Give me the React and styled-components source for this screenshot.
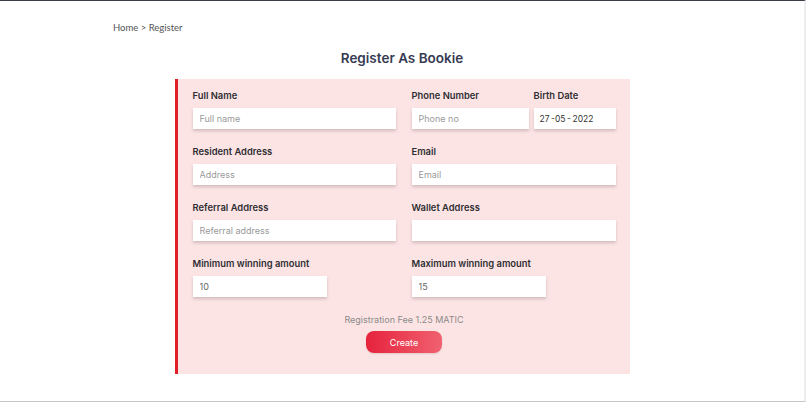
import React from "react";
import styled, { createGlobalStyle } from "styled-components";

const GlobalStyle = createGlobalStyle`
  * { box-sizing: border-box; }
  body {
    margin: 0;
    background: #fff;
    font-family: "Inter", "Open Sans", sans-serif;
  }
`;

function Field({ label, placeholder, value, width }) {
  return (
    <FieldBox>
      <Label>{label}</Label>
      <Input placeholder={placeholder} defaultValue={value} $width={width} />
    </FieldBox>
  );
}

function App() {
  return (
    <Page>
      <GlobalStyle />
      <Breadcrumb>Home &gt; Register</Breadcrumb>
      <Title>Register As Bookie</Title>
      <Card>
        <FormGrid>
          <Field label="Full Name" placeholder="Full name" />
          <SplitRow>
            <FieldBox>
              <Label>Phone Number</Label>
              <Input placeholder="Phone no" />
            </FieldBox>
            <FieldBox>
              <Label>Birth Date</Label>
              <DateInput>27{"\u2009"}-05{"\u2009"}-{"\u2009"}2022</DateInput>
            </FieldBox>
          </SplitRow>
          <Field label="Resident Address" placeholder="Address" />
          <Field label="Email" placeholder="Email" />
          <Field label="Referral Address" placeholder="Referral address" />
          <Field label="Wallet Address" />
          <Field label="Minimum winning amount" value="10" width="134px" />
          <Field label="Maximum winning amount" value="15" width="134px" />
        </FormGrid>
        <Footer>
          <Fee>Registration Fee 1.25 MATIC</Fee>
          <CreateButton type="button">Create</CreateButton>
        </Footer>
      </Card>
    </Page>
  );
}

export default App;

const Page = styled.div`
  height: 402px;
  border-top: 1px solid #3a3e48;
  border-bottom: 1px solid #c4c4c4;
  border-right: 2px solid #ededed;
  overflow: hidden;
`;

const Breadcrumb = styled.div`
  padding: 20px 0 0 113px;
  font-family: "Lato", sans-serif;
  font-size: 9.5px;
  line-height: 14px;
  color: #555;
`;

const Title = styled.h1`
  margin: 14px 0 0;
  text-align: center;
  font-size: 13.5px;
  line-height: 18px;
  font-weight: 600;
  color: #363a52;
`;

const Card = styled.section`
  width: 455px;
  margin: 12px auto 0;
  padding: 11px 14px 21px 15px;
  background: #fde4e4;
  border-left: 3px solid #e01e28;
`;

const FormGrid = styled.div`
  display: grid;
  grid-template-columns: 203px 204px;
  column-gap: 16px;
  row-gap: 17px;
`;

const FieldBox = styled.div`
  display: flex;
  flex-direction: column;
  gap: 6px;
`;

const SplitRow = styled.div`
  display: grid;
  grid-template-columns: 117px 82px;
  column-gap: 5px;
`;

const Label = styled.label`
  font-size: 9.4px;
  line-height: 12px;
  font-weight: 600;
  color: #2e2e33;
`;

const Input = styled.input`
  width: ${(p) => p.$width || "100%"};
  height: 21px;
  border: none;
  outline: none;
  padding: 0 7px;
  background: #fff;
  font-family: "Inter", sans-serif;
  font-size: 9px;
  color: #666;
  box-shadow: 0 2px 3px rgba(0, 0, 0, 0.18);

  &::placeholder {
    color: #9a9a9a;
  }
`;

const DateInput = styled.div`
  display: flex;
  align-items: center;
  height: 21px;
  padding: 0 6px;
  background: #fff;
  font-size: 8.5px;
  color: #333;
  box-shadow: 0 2px 3px rgba(0, 0, 0, 0.18);
`;

const Footer = styled.div`
  display: flex;
  flex-direction: column;
  align-items: center;
  margin-top: 17px;
  gap: 5px;
`;

const Fee = styled.div`
  font-size: 9px;
  line-height: 12px;
  color: #8a8a8a;
`;

const CreateButton = styled.button`
  width: 76px;
  height: 22px;
  border: none;
  border-radius: 8px;
  background: linear-gradient(90deg, #e6233d, #f0616f);
  color: #fff;
  font-family: "Inter", sans-serif;
  font-size: 9px;
  box-shadow: 0 1px 2px rgba(0, 0, 0, 0.12);
  cursor: pointer;
`;
